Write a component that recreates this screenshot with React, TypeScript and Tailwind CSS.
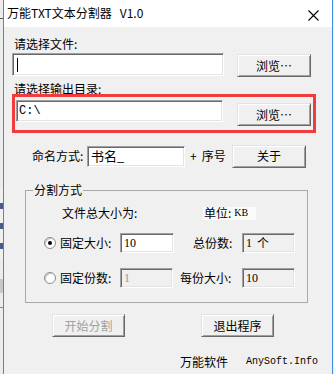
import React from "react";

const cjk = "font-['Noto_Sans_CJK_SC','Noto_Sans',sans-serif]";
const sunken =
  "border border-t-[#a0a0a0] border-l-[#a0a0a0] border-b-white border-r-white shadow-[inset_1px_1px_0_#696969,inset_-1px_-1px_0_#e3e3e3]";
const raised =
  "border border-t-[#e3e3e3] border-l-[#e3e3e3] border-b-[#696969] border-r-[#696969] shadow-[inset_1px_1px_0_#ffffff,inset_-1px_-1px_0_#a0a0a0] bg-[#f0f0f0]";

function Btn({ children, w, disabled }: { children: React.ReactNode; w: string; disabled?: boolean }) {
  return (
    <div
      className={`${raised} ${w} h-[23px] flex items-center justify-center text-[12px] leading-[16px] ${
        disabled ? "text-[#a0a0a0]" : "text-black"
      }`}
    >
      {children}
    </div>
  );
}

function Radio({ checked }: { checked?: boolean }) {
  return (
    <div className="w-[12px] h-[12px] rounded-full border border-[#8c8c8c] bg-white shadow-[inset_1px_1px_0_#c8c8c8] flex items-center justify-center">
      {checked && <div className="w-[4px] h-[4px] rounded-full bg-black" />}
    </div>
  );
}

export default function App() {
  return (
    <div className={`w-[334px] h-[374px] flex overflow-hidden bg-[#f0f0f0] ${cjk}`}>
      {/* left strip (background behind window) */}
      <div className="w-[3px] h-full bg-[#ececec] flex flex-col">
        <div className="h-[18px]" />
        <div className="h-[1px] bg-[#555]" />
        <div className="h-[170px]" />
        <div className="h-[70px] bg-[repeating-linear-gradient(180deg,#f0f0f0_0px,#f0f0f0_14px,#4a5a8a_14px,#4a5a8a_20px)]" />
        <div className="h-[20px]" />
        <div className="h-[14px] bg-[#c8c8c8]" />
        <div className="h-[14px]" />
        <div className="h-[1px] bg-[#888]" />
      </div>
      <div className="w-[1px] h-full bg-[#3c8ce0]" />

      {/* window */}
      <div className="w-[328px] h-full flex flex-col">
        {/* title bar */}
        <div className="h-[27px] bg-white flex items-center justify-between pl-[3px] pr-[13px]">
          <span className="text-[12px] leading-[16px] text-black mt-[-1px] flex">
            <span>万能TXT文本分割器</span>
            <span className="ml-[8px]">V1.0</span>
          </span>
          <svg width="11" height="11" viewBox="0 0 11 11" className="mt-[3px]">
            <path d="M0.5 0.5 L10.5 10.5 M10.5 0.5 L0.5 10.5" stroke="#000" strokeWidth="1.1" />
          </svg>
        </div>

        {/* body */}
        <div className="flex-1 bg-[#f0f0f0] flex flex-col pl-[8px] text-[12px] leading-[16px] text-black">
          <div className="mt-[9px] ml-[2px] h-[16px]">请选择文件:</div>
          <div className="flex items-start mt-[1px]">
            <div className={`${sunken} bg-white w-[212px] h-[23px] flex items-center pl-[4px]`}>
              <div className="w-[1px] h-[14px] bg-black" />
            </div>
            <div className="ml-[13px] mt-[1px]">
              <Btn w="w-[74px]">浏览…</Btn>
            </div>
          </div>

          <div className="mt-[4px] ml-[2px] h-[13px] leading-[16px]">请选择输出目录:</div>
          <div className="w-[304px] h-[39px] border-[3px] border-[#f03c3c] flex items-start">
            <div className={`${sunken} bg-white w-[207px] h-[22px] ml-[1px] mt-[3px] flex items-center pl-[2px] font-['Liberation_Mono',monospace] text-[12px]`}>
              C:\
            </div>
            <div className="ml-[14px] mt-[6px]">
              <Btn w="w-[74px]">浏览…</Btn>
            </div>
          </div>

          <div className="flex items-center mt-[12px] ml-[20px] h-[22px]">
            <div className="w-[55px]">命名方式:</div>
            <div className={`${sunken} bg-white w-[98px] h-[21px] flex items-center pl-[3px] text-[13px]`}>书名_</div>
            <div className="w-[47px] pl-[5px] flex">
              <span>+</span>
              <span className="ml-[5px]">序号</span>
            </div>
            <Btn w="w-[74px]">关于</Btn>
          </div>

          {/* group box */}
          <div className="relative mt-[23px] ml-[13px] w-[283px] h-[113px] border border-[#a9a9a9] flex flex-col">
            <div className="absolute left-[7px] top-[-9px] px-[1px] bg-[#f0f0f0] text-[12px] leading-[16px]">分割方式</div>

            <div className="flex items-center mt-[14px] h-[16px]">
              <div className="ml-[36px] w-[141px]">文件总大小为:</div>
              <div className="w-[53px] h-[13px] bg-[#fafafa] flex items-center pl-[1px] text-[12px]">
                单位:<span className="ml-[3px] font-['Liberation_Serif',serif] text-[10px]">KB</span>
              </div>
            </div>

            <div className="flex items-center mt-[12px] h-[20px]">
              <div className="ml-[18px]">
                <Radio checked />
              </div>
              <div className="ml-[4px] w-[60px]">固定大小:</div>
              <div className={`${sunken} bg-white w-[54px] h-[20px] flex items-center pl-[3px] font-['Liberation_Serif',serif] text-[12px]`}>10</div>
              <div className="ml-[19px] w-[49px]">总份数:</div>
              <div className={`${sunken} bg-[#f0f0f0] w-[53px] h-[20px] flex items-center pl-[3px] font-['Liberation_Serif',serif] text-[12px]`}>
                1 <span className={`ml-[5px] ${cjk}`}>个</span>
              </div>
            </div>

            <div className="flex items-center mt-[15px] h-[20px]">
              <div className="ml-[18px]">
                <Radio />
              </div>
              <div className="ml-[4px] w-[60px]">固定份数:</div>
              <div className={`${sunken} bg-[#f0f0f0] w-[53px] h-[20px] flex items-center pl-[3px] font-['Liberation_Serif',serif] text-[12px] text-[#9a9a9a]`}>1</div>
              <div className="ml-[7px] w-[62px]">每份大小:</div>
              <div className={`${sunken} bg-[#f0f0f0] w-[53px] h-[20px] flex items-center pl-[3px] font-['Liberation_Serif',serif] text-[12px]`}>10</div>
            </div>
          </div>

          <div className="flex mt-[11px]">
            <div className="ml-[40px]">
              <Btn w="w-[73px]" disabled>
                开始分割
              </Btn>
            </div>
            <div className="ml-[76px]">
              <Btn w="w-[73px]">退出程序</Btn>
            </div>
          </div>

          <div className="flex items-center mt-[17px] h-[16px]">
            <div className="ml-[168px] w-[66px]">万能软件</div>
            <div className="font-['Liberation_Mono',monospace] text-[10px]">AnySoft.Info</div>
          </div>
        </div>
      </div>

      <div className="w-[1px] h-full bg-[#3c8ce0]" />
      <div className="w-[1px] h-full bg-[#f0f0f0]" />
    </div>
  );
}
